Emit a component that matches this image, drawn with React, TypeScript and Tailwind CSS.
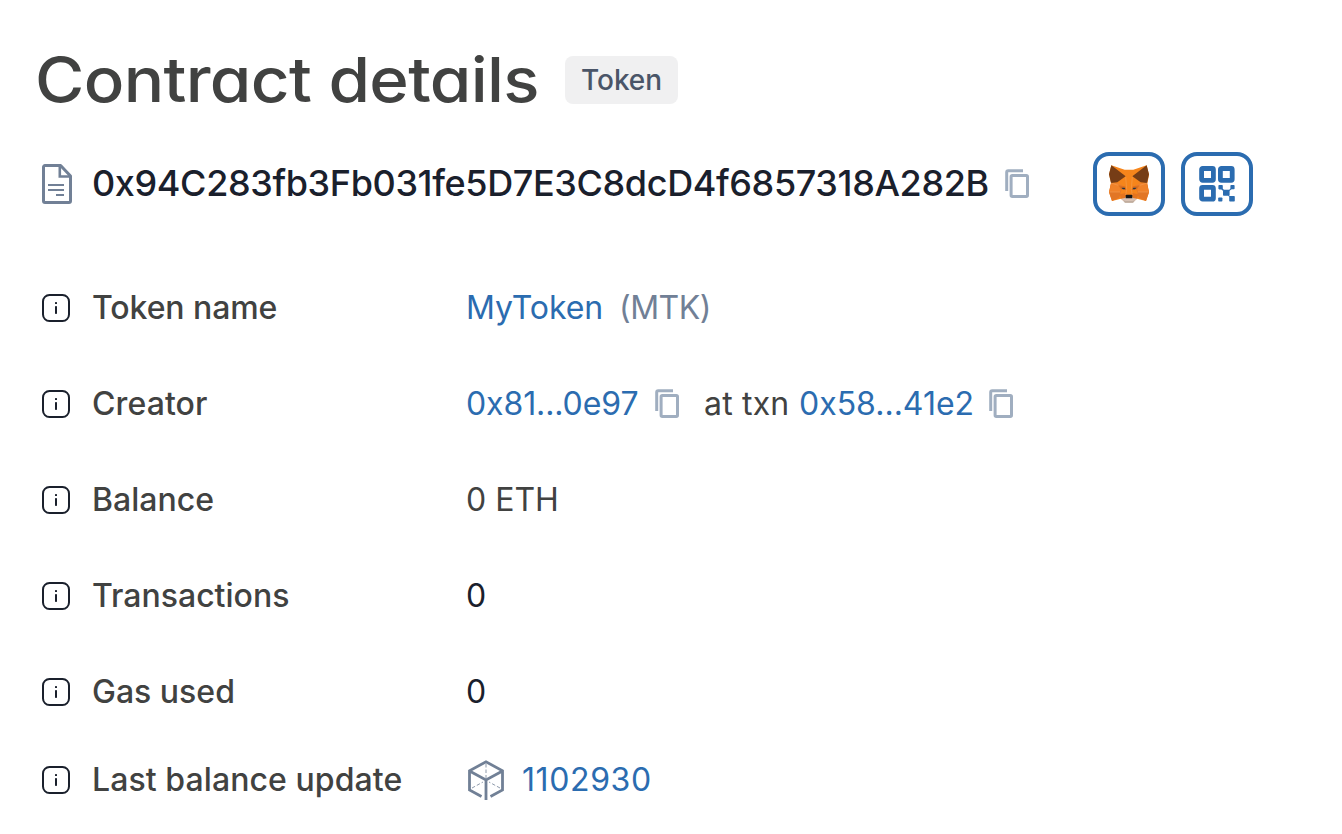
import type { ReactNode } from "react";

function CopyIcon() {
  return (
    <svg className="h-[30px] w-[26px] shrink-0" viewBox="0 0 26 30" fill="none" stroke="#a0aec0" strokeWidth="3">
      <path d="M1.7 22V3.2a1.5 1.5 0 0 1 1.5-1.5H18" />
      <rect x="6.1" y="6.5" width="16.4" height="21" rx="1.2" />
    </svg>
  );
}

function InfoIcon() {
  return (
    <svg className="h-7 w-7 shrink-0" viewBox="0 0 28 28" fill="none">
      <rect x="1" y="1" width="26" height="26" rx="6.5" stroke="#1a202c" strokeWidth="2" />
      <rect x="13" y="8" width="2" height="2" rx="0.6" fill="#1a202c" />
      <rect x="13" y="12" width="2" height="8" rx="0.8" fill="#1a202c" />
    </svg>
  );
}

function ContractIcon() {
  return (
    <svg className="h-10 w-[30px] shrink-0" viewBox="0 0 30 40" fill="none" stroke="#718096">
      <path d="M3 1.5h15.6L28.5 12v25a1.5 1.5 0 0 1-1.5 1.5H3A1.5 1.5 0 0 1 1.5 37V3A1.5 1.5 0 0 1 3 1.5Z" strokeWidth="3" strokeLinejoin="round" />
      <path d="M17.8 2v10.5H28" strokeWidth="2.6" />
      <path d="M6 21h16M6 26h16M14 31h8" strokeWidth="2" />
    </svg>
  );
}

function BlockIcon() {
  return (
    <svg className="h-10 w-9 shrink-0" viewBox="0 0 36 40" fill="none" stroke="#718096">
      <path d="M13.5 36.4 1.5 30V10.8L18 1.8l16.5 9V30l-12 6.4" strokeWidth="2.8" />
      <path d="m1.5 11 16.5 9 16.5-9M18 20v20" strokeWidth="2.8" />
      <path d="M18 4v14M4 28l11-6M32 28l-11-6" strokeWidth="0.8" strokeDasharray="3.5 2" />
    </svg>
  );
}

function FoxIcon() {
  return (
    <svg className="h-[38px] w-10" viewBox="0 0 120 114">
      <path fill="#f6851b" d="M7 1 47 14h26l40-13 7 28-5 27 5 26-9 26-27-7-12 10H48L36 101 9 108 0 82l6-28L0 28Z" />
      <path fill="#e27625" d="m6 54-6 28 9 26 22-10 7-27-12-10ZM114 54l6 28-9 26-22-10-7-27 12-10Z" />
      <path fill="#f08229" d="m7 54-6 28h32l7-21-14-8ZM113 54l6 28H87l-7-21 14-8Z" />
      <path fill="#763d16" d="M7 1 0 28l6 26 19-2 25-18ZM113 1l7 27-6 26-19-2-25-18Z" />
      <path fill="#dc701f" d="m28 61 20 3 5 11-17-2ZM92 61l-20 3-5 11 17-2Z" />
      <path fill="#e4751f" d="m32 88 19-4-3 18-12-1ZM88 88l-19-4 3 18 12-1Z" />
      <path fill="#d7c1b3" d="m36 101 12-2 3-5h18l3 5 12 2-12 12H48Z" />
      <path fill="#c0ad9e" d="m42 106 8 2h20l8-2-6 7H48Z" />
      <path fill="#161616" d="m50 91 2-2h16l2 2v9H50Z" />
      <path fill="#233447" d="m37 68 10 0 2 5-7 0ZM83 68l-10 0-2 5 7 0Z" />
      <path fill="none" stroke="#f2b27a" strokeWidth="1" d="M50 35 53 73 50 90M70 35 67 73 70 90M6 54 28 61M114 54 92 61M1 81h33M119 81H86" />
    </svg>
  );
}

function QrIcon() {
  return (
    <svg className="h-9 w-9" viewBox="0 0 36 36" fill="#2b6cb0">
      <g fill="none" stroke="#2b6cb0" strokeWidth="4.8">
        <rect x="2.6" y="2.5" width="11.8" height="11.8" rx="1" />
        <rect x="21.4" y="2.5" width="11.8" height="11.8" rx="1" />
        <rect x="2.6" y="21.4" width="11.8" height="11.8" rx="1" />
      </g>
      <rect x="19.4" y="19" width="4.4" height="4.4" rx="0.8" />
      <rect x="31.4" y="19" width="4.2" height="4.2" rx="0.8" />
      <rect x="24" y="23.8" width="6.6" height="6" rx="0.8" />
      <rect x="19.2" y="31.4" width="4.2" height="4.2" rx="0.8" />
      <rect x="30.2" y="30" width="5.6" height="5.6" rx="0.8" />
      <path d="m23 22.2 2 1.6-1 1.2-1.8-2ZM29.5 24.2l2.6-2 .6.8-2.4 2ZM29.6 29l1.4 1.4-.6.6-1.4-1.4Z" />
    </svg>
  );
}

function ActionButton({ label, children }: { label: string; children: ReactNode }) {
  return (
    <button aria-label={label} className="flex h-16 w-[72px] items-center justify-center rounded-[16px] border-4 border-[#2b6cb0]">
      {children}
    </button>
  );
}

function Row({ label, tracking = "", last = false, children }: { label: string; tracking?: string; last?: boolean; children: ReactNode }) {
  return (
    <div className={`flex items-center ${last ? "h-20" : "h-24"}`}>
      <InfoIcon />
      <dt className={`ml-[22px] w-[374px] font-medium text-[#414241] ${tracking}`}>{label}</dt>
      <dd className="flex items-center whitespace-pre">{children}</dd>
    </div>
  );
}

export default function App() {
  return (
    <main className="h-[834px] w-full overflow-hidden bg-white font-['Inter',sans-serif] text-[32px] leading-[48px]">
      <header className="flex h-[120px] items-center pt-10 pl-[35px]">
        <h1 className="w-[530px] origin-left scale-x-[1.085] text-[62px] leading-[80px] font-medium tracking-[-0.6px] whitespace-nowrap text-[#414241] [font-feature-settings:'cv11']">
          Contract details
        </h1>
        <span className="flex h-12 w-[113px] items-center justify-center rounded-lg bg-[#f0f0f1] text-[28px] font-medium tracking-[-0.1px] text-[#4a5568]">
          Token
        </span>
      </header>
      <section className="mt-8 flex h-16 items-center pl-[42px]">
        <ContractIcon />
        <span className="ml-[20px] w-[913px] pb-0.5 text-[36px] font-medium tracking-[-0.37px] whitespace-nowrap text-[#1a202c] [font-feature-settings:'cv11']">
          0x94C283fb3Fb031fe5D7E3C8dcD4f6857318A282B
        </span>
        <CopyIcon />
        <div className="ml-[62px] flex gap-4">
          <ActionButton label="Add token to wallet"><FoxIcon /></ActionButton>
          <ActionButton label="Show QR code"><QrIcon /></ActionButton>
        </div>
      </section>
      <dl className="pt-11 pl-[42px]">
        <Row label="Token name" tracking="tracking-[-0.08px]">
          <a className="tracking-[-0.1px] text-[#2b6cb0]">MyToken</a>
          <span className="ml-[16px] tracking-[-0.5px] text-[#718096]">(MTK)</span>
        </Row>
        <Row label="Creator" tracking="tracking-[0.1px]">
          <a className="w-[189px] tracking-[-0.1px] text-[#2b6cb0]">0x81...0e97</a>
          <CopyIcon />
          <span className="ml-[23px] w-[95px] tracking-[0.2px] text-[#414241]">at txn</span>
          <a className="w-[190px] text-[#2b6cb0]">0x58...41e2</a>
          <CopyIcon />
        </Row>
        <Row label="Balance"><span className="text-[#414241]">0 ETH</span></Row>
        <Row label="Transactions"><span className="text-[#1a202c]">0</span></Row>
        <Row label="Gas used"><span className="text-[#1a202c]">0</span></Row>
        <Row label="Last balance update" tracking="tracking-[0.08px]" last>
          <span className="ml-[2px] flex"><BlockIcon /></span>
          <a className="ml-[18px] tracking-[0.6px] text-[#2b6cb0]">1102930</a>
        </Row>
      </dl>
    </main>
  );
}
